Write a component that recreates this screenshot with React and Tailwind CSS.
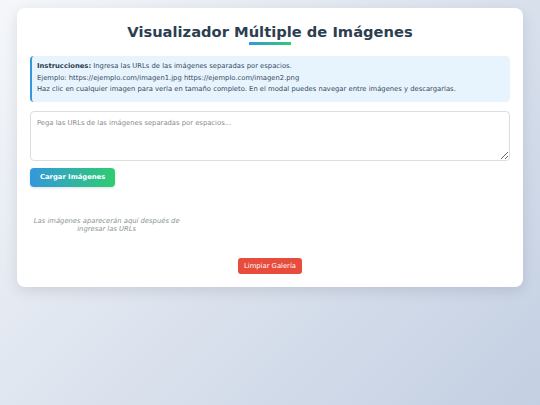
export default function App() {
  return (
    <div className="min-h-screen w-full bg-[linear-gradient(135deg,#f5f7fa_0%,#c3cfe2_100%)] px-[17px] pt-[8px] pb-[20px] font-['DejaVu_Sans',Verdana,sans-serif]">
      <div className="rounded-[8px] bg-white px-[13px] pt-[14.5px] pb-[12.5px] shadow-[0_4px_14px_rgba(0,0,0,0.1)]">
        <h1 className="text-center text-[14.7px] font-bold leading-[17.5px] text-[#2c3e50]">
          Visualizador Múltiple de Imágenes
        </h1>
        <div className="mx-auto mt-[2px] h-[2.5px] w-[42px] bg-[linear-gradient(90deg,#3498db,#2ecc71)]"></div>

        <div className="mt-[11px] rounded-[4px] border-l-[2px] border-[#3498db] bg-[#e8f4fd] px-[5px] pt-[5.5px] pb-[6px] text-[6.8px] leading-[11.5px] text-[#34495e]">
          <p>
            <strong className="font-bold text-[#2c3e50]">Instrucciones:</strong> Ingresa las URLs de las imágenes separadas por espacios.
          </p>
          <p>Ejemplo: https://ejemplo.com/imagen1.jpg https://ejemplo.com/imagen2.png</p>
          <p>Haz clic en cualquier imagen para verla en tamaño completo. En el modal puedes navegar entre imágenes y descargarlas.</p>
        </div>

        <textarea
          className="mt-[9px] block h-[50px] w-full rounded-[4px] border border-[#dddddd] bg-white px-[6px] py-[7px] text-[6.8px] leading-[8px] text-[#333] placeholder:text-[#8a8a8a] outline-none"
          placeholder="Pega las URLs de las imágenes separadas por espacios..."
        ></textarea>

        <button className="mt-[7px] flex h-[19.5px] items-center rounded-[4px] bg-[linear-gradient(90deg,#3498db,#2ecc71)] px-[10px] text-[6.8px] font-bold text-white shadow-[0_1px_3px_rgba(0,0,0,0.12)]">
          Cargar Imágenes
        </button>

        <div className="mt-[30px] grid grid-cols-3 gap-[10px]">
          <p className="text-center text-[6.8px] italic leading-[8.2px] text-[#8c9596]">
            Las imágenes aparecerán aquí después de ingresar las URLs
          </p>
        </div>

        <div className="mt-[25px] flex justify-center">
          <button className="flex h-[15.7px] items-center rounded-[3px] bg-[#e74c3c] px-[6.5px] text-[6.8px] text-white">
            Limpiar Galería
          </button>
        </div>
      </div>
    </div>
  );
}
